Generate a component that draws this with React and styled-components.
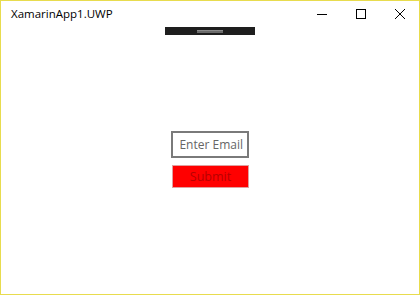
import React from 'react'
import styled, { createGlobalStyle } from 'styled-components'

const GlobalStyle = createGlobalStyle`
    html, body {
        margin: 0;
        padding: 0;
        background: #fff;
    }
    body {
        font-family: "Open Sans", "Noto Sans", sans-serif;
    }
`

const Window = styled.div`
    box-sizing: border-box;
    width: 420px;
    height: 295px;
    border: 1px solid #e8dc4e;
    display: flex;
    flex-direction: column;
    background: #fff;
`

const TitleBar = styled.div`
    height: 26px;
    display: flex;
    align-items: center;
    justify-content: space-between;
    flex-shrink: 0;
`

const Title = styled.span`
    font-size: 11.5px;
    color: #000;
    padding-left: 10px;
    padding-bottom: 2px;
`

const Controls = styled.div`
    display: flex;
    height: 100%;
`

const ControlButton = styled.div`
    width: 39px;
    height: 100%;
    display: flex;
    align-items: center;
    justify-content: center;
`

const DebugBar = styled.div`
    align-self: center;
    width: 90px;
    height: 8px;
    background: #1e1e1e;
    display: flex;
    align-items: center;
    justify-content: center;
`

const Handle = styled.div`
    width: 26px;
    height: 3px;
    background: #6a6a6a;
    border-top: 1px solid #8a8a8a;
    box-sizing: border-box;
`

const Content = styled.div`
    flex: 1;
    display: flex;
    flex-direction: column;
    align-items: center;
    justify-content: center;
    gap: 7px;
    padding-bottom: 10px;
`

const EmailInput = styled.div`
    box-sizing: border-box;
    width: 78px;
    height: 27px;
    border: 2px solid #7a7a7a;
    display: flex;
    align-items: center;
    justify-content: flex-end;
    padding-right: 4px;
    font-size: 12px;
    color: #666;
    white-space: nowrap;
`

const SubmitButton = styled.div`
    box-sizing: border-box;
    width: 77px;
    height: 23px;
    margin-left: 1px;
    background: #ff0000;
    border: 1px solid #e0a0a0;
    display: flex;
    align-items: center;
    justify-content: center;
    font-size: 12.5px;
    color: #b80000;
`

const App = () => {
    return (
        <>
            <GlobalStyle />
            <Window>
                <TitleBar>
                    <Title>XamarinApp1.UWP</Title>
                    <Controls>
                        <ControlButton>
                            <svg width="10" height="10" viewBox="0 0 10 10">
                                <line x1="0" y1="5.5" x2="10" y2="5.5" stroke="#000" strokeWidth="1" />
                            </svg>
                        </ControlButton>
                        <ControlButton>
                            <svg width="10" height="10" viewBox="0 0 10 10">
                                <rect x="0.5" y="0.5" width="9" height="9" fill="none" stroke="#000" strokeWidth="1" />
                            </svg>
                        </ControlButton>
                        <ControlButton>
                            <svg width="10" height="10" viewBox="0 0 10 10">
                                <path d="M0 0 L10 10 M10 0 L0 10" stroke="#000" strokeWidth="1" />
                            </svg>
                        </ControlButton>
                    </Controls>
                </TitleBar>
                <DebugBar>
                    <Handle />
                </DebugBar>
                <Content>
                    <EmailInput>Enter Email</EmailInput>
                    <SubmitButton>Submit</SubmitButton>
                </Content>
            </Window>
        </>
    )
}

export default App
